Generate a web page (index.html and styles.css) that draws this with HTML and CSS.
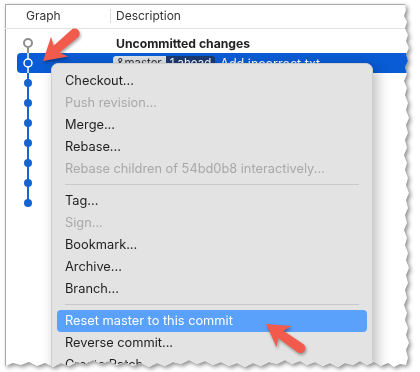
FILE: index.html
```html
<!DOCTYPE html>
<html lang="en">
<head>
    <meta charset="UTF-8">
    <title>Reset master</title>
    <link rel="stylesheet" href="styles.css">
</head>
<body>
    <div class="sheet">
        <div class="window">
            <div class="header">
                <div class="col-graph">Graph</div>
                <div class="col-desc">Description</div>
            </div>

            <div class="rows">
                <div class="row">
                    <div class="graph">
                        <svg width="20" height="20"><line x1="11" y1="10" x2="11" y2="20" class="edge-gray"/><circle cx="11" cy="10" r="4" class="node-wc"/></svg>
                    </div>
                    <div class="desc bold">Uncommitted changes</div>
                </div>
                <div class="row selected">
                    <div class="graph">
                        <svg width="20" height="20"><line x1="11" y1="0" x2="11" y2="20" class="edge-white"/><circle cx="11" cy="10" r="4" class="node-sel"/></svg>
                    </div>
                    <div class="desc">
                        <span class="tag tag-branch">&amp;master</span><span class="tag tag-ahead">1 ahead</span>
                        <span class="msg">Add incorrect.txt</span>
                    </div>
                </div>
                <div class="row"><div class="graph"><svg width="20" height="20"><line x1="11" y1="0" x2="11" y2="20" class="edge"/><circle cx="11" cy="10" r="4" class="node"/></svg></div><div class="desc"></div></div>
                <div class="row"><div class="graph"><svg width="20" height="20"><line x1="11" y1="0" x2="11" y2="20" class="edge"/><circle cx="11" cy="10" r="4" class="node"/></svg></div><div class="desc"></div></div>
                <div class="row"><div class="graph"><svg width="20" height="20"><line x1="11" y1="0" x2="11" y2="20" class="edge"/><circle cx="11" cy="10" r="4" class="node"/></svg></div><div class="desc"></div></div>
                <div class="row"><div class="graph"><svg width="20" height="20"><line x1="11" y1="0" x2="11" y2="20" class="edge"/><circle cx="11" cy="10" r="4" class="node"/></svg></div><div class="desc"></div></div>
                <div class="row"><div class="graph"><svg width="20" height="20"><line x1="11" y1="0" x2="11" y2="20" class="edge"/><circle cx="11" cy="10" r="4" class="node"/></svg></div><div class="desc"></div></div>
                <div class="row"><div class="graph"><svg width="20" height="20"><line x1="11" y1="0" x2="11" y2="20" class="edge"/><circle cx="11" cy="10" r="4" class="node"/></svg></div><div class="desc"></div></div>
                <div class="row"><div class="graph"><svg width="20" height="20"><line x1="11" y1="0" x2="11" y2="10" class="edge"/><circle cx="11" cy="10" r="4" class="node"/></svg></div><div class="desc"></div></div>
            </div>

            <!-- context menu for the selected commit -->
            <div class="menu">
                <div class="item">Checkout...</div>
                <div class="item disabled">Push revision...</div>
                <div class="item">Merge...</div>
                <div class="item">Rebase...</div>
                <div class="item disabled">Rebase children of 54bd0b8 interactively...</div>
                <div class="sep"></div>
                <div class="item">Tag...</div>
                <div class="item disabled">Sign...</div>
                <div class="item">Bookmark...</div>
                <div class="item">Archive...</div>
                <div class="item">Branch...</div>
                <div class="sep"></div>
                <div class="item active">Reset master to this commit</div>
                <div class="item">Reverse commit...</div>
                <div class="item">Create Patch...</div>
            </div>
        </div>
    </div>

    <!-- annotation arrows -->
    <svg class="arrows" width="420" height="372" viewBox="0 0 420 372">
        <path class="arrow" transform="translate(43 61) rotate(-41)" d="M0,0 L22,-13 L18,-4.5 L42,-5 A5,5 0 0 1 42,5 L18,4.5 L22,13 Z"/>
        <path class="arrow" transform="translate(266 324) rotate(35)" d="M0,0 L22,-13 L18,-4.5 L42,-5 A5,5 0 0 1 42,5 L18,4.5 L22,13 Z"/>
    </svg>
</body>
</html>
```

FILE: styles.css
```css
body {
    margin: 0;
    background: #fff;
    font-family: Inter, "Noto Sans", sans-serif;
    position: relative;
    width: 420px;
    height: 372px;
    overflow: hidden;
}
.sheet {
    margin: 4px 0 0 5px;
    width: 405px;
    height: 364px;
    filter: drop-shadow(2px 2px 2px rgba(0, 0, 0, 0.45));
}
.window {
    position: relative;
    width: 100%;
    height: 100%;
    background: #fff;
    box-shadow: inset 1px 1px 0 #a9a9a9;
    overflow: hidden;
    clip-path: polygon(0 0, 400px 0, 401px 6px, 399px 12px, 402px 18px, 400px 24px, 403px 31px, 401px 37px, 404px 44px, 401px 50px, 403px 57px, 400px 63px, 402px 70px, 399px 77px, 402px 84px, 400px 91px, 403px 99px, 401px 106px, 404px 114px, 401px 121px, 403px 129px, 400px 136px, 402px 144px, 399px 151px, 402px 159px, 400px 166px, 403px 174px, 401px 181px, 404px 189px, 401px 196px, 403px 204px, 400px 211px, 402px 219px, 399px 226px, 402px 234px, 400px 241px, 403px 249px, 401px 256px, 404px 264px, 401px 271px, 403px 279px, 400px 286px, 402px 294px, 399px 301px, 402px 309px, 400px 316px, 403px 324px, 401px 331px, 404px 339px, 401px 346px, 403px 354px, 401px 361px, 395px 360px, 389px 363px, 383px 359px, 376px 362px, 369px 358px, 362px 361px, 355px 357px, 348px 361px, 340px 359px, 333px 363px, 325px 359px, 318px 362px, 310px 358px, 302px 361px, 295px 357px, 287px 360px, 280px 356px, 272px 360px, 264px 358px, 256px 362px, 248px 359px, 240px 363px, 232px 359px, 224px 362px, 216px 358px, 208px 361px, 200px 357px, 192px 360px, 184px 356px, 176px 360px, 168px 358px, 160px 362px, 152px 359px, 144px 363px, 136px 359px, 128px 362px, 120px 358px, 112px 361px, 104px 357px, 96px 360px, 88px 356px, 80px 360px, 72px 358px, 64px 362px, 56px 359px, 48px 363px, 40px 359px, 32px 362px, 24px 358px, 16px 361px, 8px 359px, 0 362px);
}
.header {
    display: flex;
    align-items: center;
    height: 23px;
    padding-bottom: 1px;
    border-bottom: 1px solid #e2e2e2;
    font-size: 12px;
    color: #333;
}
.col-graph {
    width: 106px;
    padding-left: 21px;
    box-sizing: border-box;
    border-right: 1px solid #dcdcdc;
    line-height: 14px;
}
.col-desc {
    padding-left: 5px;
}
.rows {
    padding-top: 4px;
}
.row {
    display: flex;
    align-items: center;
    height: 20px;
    margin-left: 12px;
}
.row.selected {
    background: #0a5cd6;
    border-radius: 4px 0 0 4px;
    color: #fff;
}
.graph {
    width: 99px;
    height: 20px;
}
.graph svg {
    display: block;
}
.edge { stroke: #1764d0; stroke-width: 2; }
.edge-gray { stroke: #8e8e8e; stroke-width: 2; }
.edge-white { stroke: #fff; stroke-width: 1.5; }
.node { fill: #1764d0; }
.node-wc { fill: #fff; stroke: #8e8e8e; stroke-width: 2; }
.node-sel { fill: #0a5cd6; stroke: #fff; stroke-width: 1.5; }
.desc {
    font-size: 12.6px;
    white-space: nowrap;
    display: flex;
    align-items: center;
}
.bold {
    font-size: 12.2px;
    font-weight: 700;
    color: #222;
}
.tag {
    font-size: 11.5px;
    padding: 0 4px;
    height: 15px;
    line-height: 15px;
}
.tag-branch {
    background: #dde1e8;
    color: #333;
    border-radius: 3px 0 0 3px;
    margin-left: -3px;
}
.tag-ahead {
    background: #1c3a70;
    color: #fff;
    border-radius: 0 3px 3px 0;
}
.msg {
    margin-left: 5px;
}
.menu {
    position: absolute;
    left: 46px;
    top: 59px;
    width: 320px;
    padding-top: 6px;
    background: #e3e3e3;
    border: 1px solid #cfcfcf;
    border-radius: 7px;
    box-shadow: 4px 3px 14px rgba(0, 0, 0, 0.26);
    font-size: 12.8px;
    color: #1e1e1e;
}
.item {
    height: 22px;
    line-height: 22px;
    margin: 0 5px 0 5px;
    padding: 0 8px;
    border-radius: 4px;
    white-space: nowrap;
}
.item.disabled {
    color: #a8a8a8;
}
.item.active {
    background: #5aa1fb;
    color: #fff;
}
.sep {
    height: 1px;
    margin: 4px 13px 5px;
    background: #c9c9c9;
}
.arrows {
    position: absolute;
    left: 0;
    top: 0;
    filter: drop-shadow(1px 2px 1.5px rgba(0, 0, 0, 0.35));
}
.arrow {
    fill: #f25a4b;
}
```
